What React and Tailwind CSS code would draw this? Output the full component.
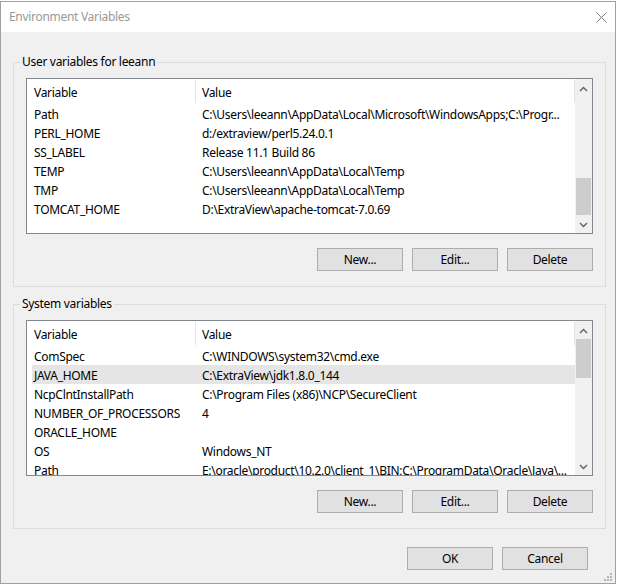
import React from "react";

const userVars = [
  { name: "Path", value: "C:\\Users\\leeann\\AppData\\Local\\Microsoft\\WindowsApps;C:\\Progr..." },
  { name: "PERL_HOME", value: "d:/extraview/perl5.24.0.1" },
  { name: "SS_LABEL", value: "Release 11.1 Build 86" },
  { name: "TEMP", value: "C:\\Users\\leeann\\AppData\\Local\\Temp" },
  { name: "TMP", value: "C:\\Users\\leeann\\AppData\\Local\\Temp" },
  { name: "TOMCAT_HOME", value: "D:\\ExtraView\\apache-tomcat-7.0.69" },
];

const systemVars = [
  { name: "ComSpec", value: "C:\\WINDOWS\\system32\\cmd.exe" },
  { name: "JAVA_HOME", value: "C:\\ExtraView\\jdk1.8.0_144", selected: true },
  { name: "NcpClntInstallPath", value: "C:\\Program Files (x86)\\NCP\\SecureClient" },
  { name: "NUMBER_OF_PROCESSORS", value: "4" },
  { name: "ORACLE_HOME", value: "" },
  { name: "OS", value: "Windows_NT" },
  { name: "Path", value: "E:\\oracle\\product\\10.2.0\\client_1\\BIN;C:\\ProgramData\\Oracle\\Java\\..." },
];

const Chevron = ({ up }) => (
  <svg width="9" height="6" viewBox="0 0 9 6">
    <polyline
      points={up ? "1,5 4.5,1.5 8,5" : "1,1 4.5,4.5 8,1"}
      fill="none"
      stroke="#606060"
      strokeWidth="1.4"
    />
  </svg>
);

const Scrollbar = ({ thumbTop, thumbHeight }) => (
  <div className="w-[17px] flex flex-col bg-[#f0f0f0]">
    <div className="h-[17px] pt-[2px] flex items-center justify-center">
      <Chevron up />
    </div>
    <div className="flex-1 px-[1px]">
      {/* thumb sits in the track flow, offset by margin */}
      <div
        className="bg-[#cdcdcd]"
        style={{ marginTop: thumbTop, height: thumbHeight }}
      />
    </div>
    <div className="h-[17px] flex items-center justify-center">
      <Chevron />
    </div>
  </div>
);

const VarList = ({ rows, thumbTop, thumbHeight }) => (
  <div className="w-[567px] h-[156px] border border-[#828790] bg-white flex overflow-hidden">
    <div className="flex-1 flex flex-col overflow-hidden">
      <div className="h-[25px] shrink-0 flex">
        <div className="ml-[5px] w-[164px] pl-[2px] pt-[2px] flex items-center border-r border-[#e5e5e5] my-[1px]">
          Variable
        </div>
        <div className="flex-1 pl-[6px] pt-[2px] flex items-center border-r border-[#e5e5e5] my-[1px]">
          Value
        </div>
      </div>
      {rows.map((row) => (
        <div
          key={row.name}
          className={`h-[19px] shrink-0 ml-[5px] pt-[2px] flex items-center ${row.selected ? "bg-[#e5e5e5]" : ""}`}
        >
          <div className="w-[168px] pl-[2px] whitespace-nowrap overflow-hidden">{row.name}</div>
          <div className="flex-1 pl-[2px] whitespace-nowrap overflow-hidden">{row.value}</div>
        </div>
      ))}
    </div>
    <Scrollbar thumbTop={thumbTop} thumbHeight={thumbHeight} />
  </div>
);

const Button = ({ children }) => (
  <button className="w-[86px] h-[23px] bg-[#e1e1e1] border border-[#adadad] text-[12px] tracking-[-0.3px] text-black flex items-center justify-center">
    {children}
  </button>
);

const Group = ({ label, rows, thumbTop, thumbHeight, className }) => (
  <fieldset className={`w-[593px] border border-[#dcdcdc] ${className}`}>
    <legend className="ml-[6px] px-[2px] leading-[16px]">{label}</legend>
    <div className="px-[12px] pt-[8px] pb-[15px] flex flex-col">
      <VarList rows={rows} thumbTop={thumbTop} thumbHeight={thumbHeight} />
      <div className="mt-[14px] flex justify-end gap-[9px]">
        <Button>New...</Button>
        <Button>Edit...</Button>
        <Button>Delete</Button>
      </div>
    </div>
  </fieldset>
);

export default function App() {
  return (
    <div
      className="w-[618px] h-[585px] bg-white text-[12px] tracking-[-0.3px] text-black"
      style={{ fontFamily: '"Segoe UI", "Noto Sans", sans-serif' }}
    >
      <div className="relative w-[616px] h-[583px] mt-[1px] border border-[#a0a0a0] flex flex-col bg-[#f0f0f0]">
        {/* title bar */}
        <div className="h-[30px] bg-white flex items-center justify-between pl-[8px] pr-[8px]">
          <span className="text-[#999999]">Environment Variables</span>
          <svg width="11" height="11" viewBox="0 0 11 11">
            <path d="M0.5 0.5 L10.5 10.5 M10.5 0.5 L0.5 10.5" stroke="#7a7a7a" strokeWidth="1" />
          </svg>
        </div>

        <div className="flex-1 px-[12px] flex flex-col">
          <Group
            className="mt-[22px]"
            label="User variables for leeann"
            rows={userVars}
            thumbTop={82}
            thumbHeight={37}
          />
          <Group
            className="mt-[9px]"
            label="System variables"
            rows={systemVars}
            thumbTop={1}
            thumbHeight={39}
          />
          <div className="mt-[18px] flex justify-end gap-[9px] pr-[15px]">
            <Button>OK</Button>
            <Button>Cancel</Button>
          </div>
        </div>

        {/* resize grip */}
        <svg className="absolute right-[2px] bottom-[1px]" width="10" height="10" viewBox="0 0 10 10">
          <rect x="7" y="1" width="2" height="2" fill="#b4b4b4" />
          <rect x="4" y="4" width="2" height="2" fill="#b4b4b4" />
          <rect x="7" y="4" width="2" height="2" fill="#b4b4b4" />
          <rect x="1" y="7" width="2" height="2" fill="#b4b4b4" />
          <rect x="4" y="7" width="2" height="2" fill="#b4b4b4" />
          <rect x="7" y="7" width="2" height="2" fill="#b4b4b4" />
        </svg>
      </div>
    </div>
  );
}
